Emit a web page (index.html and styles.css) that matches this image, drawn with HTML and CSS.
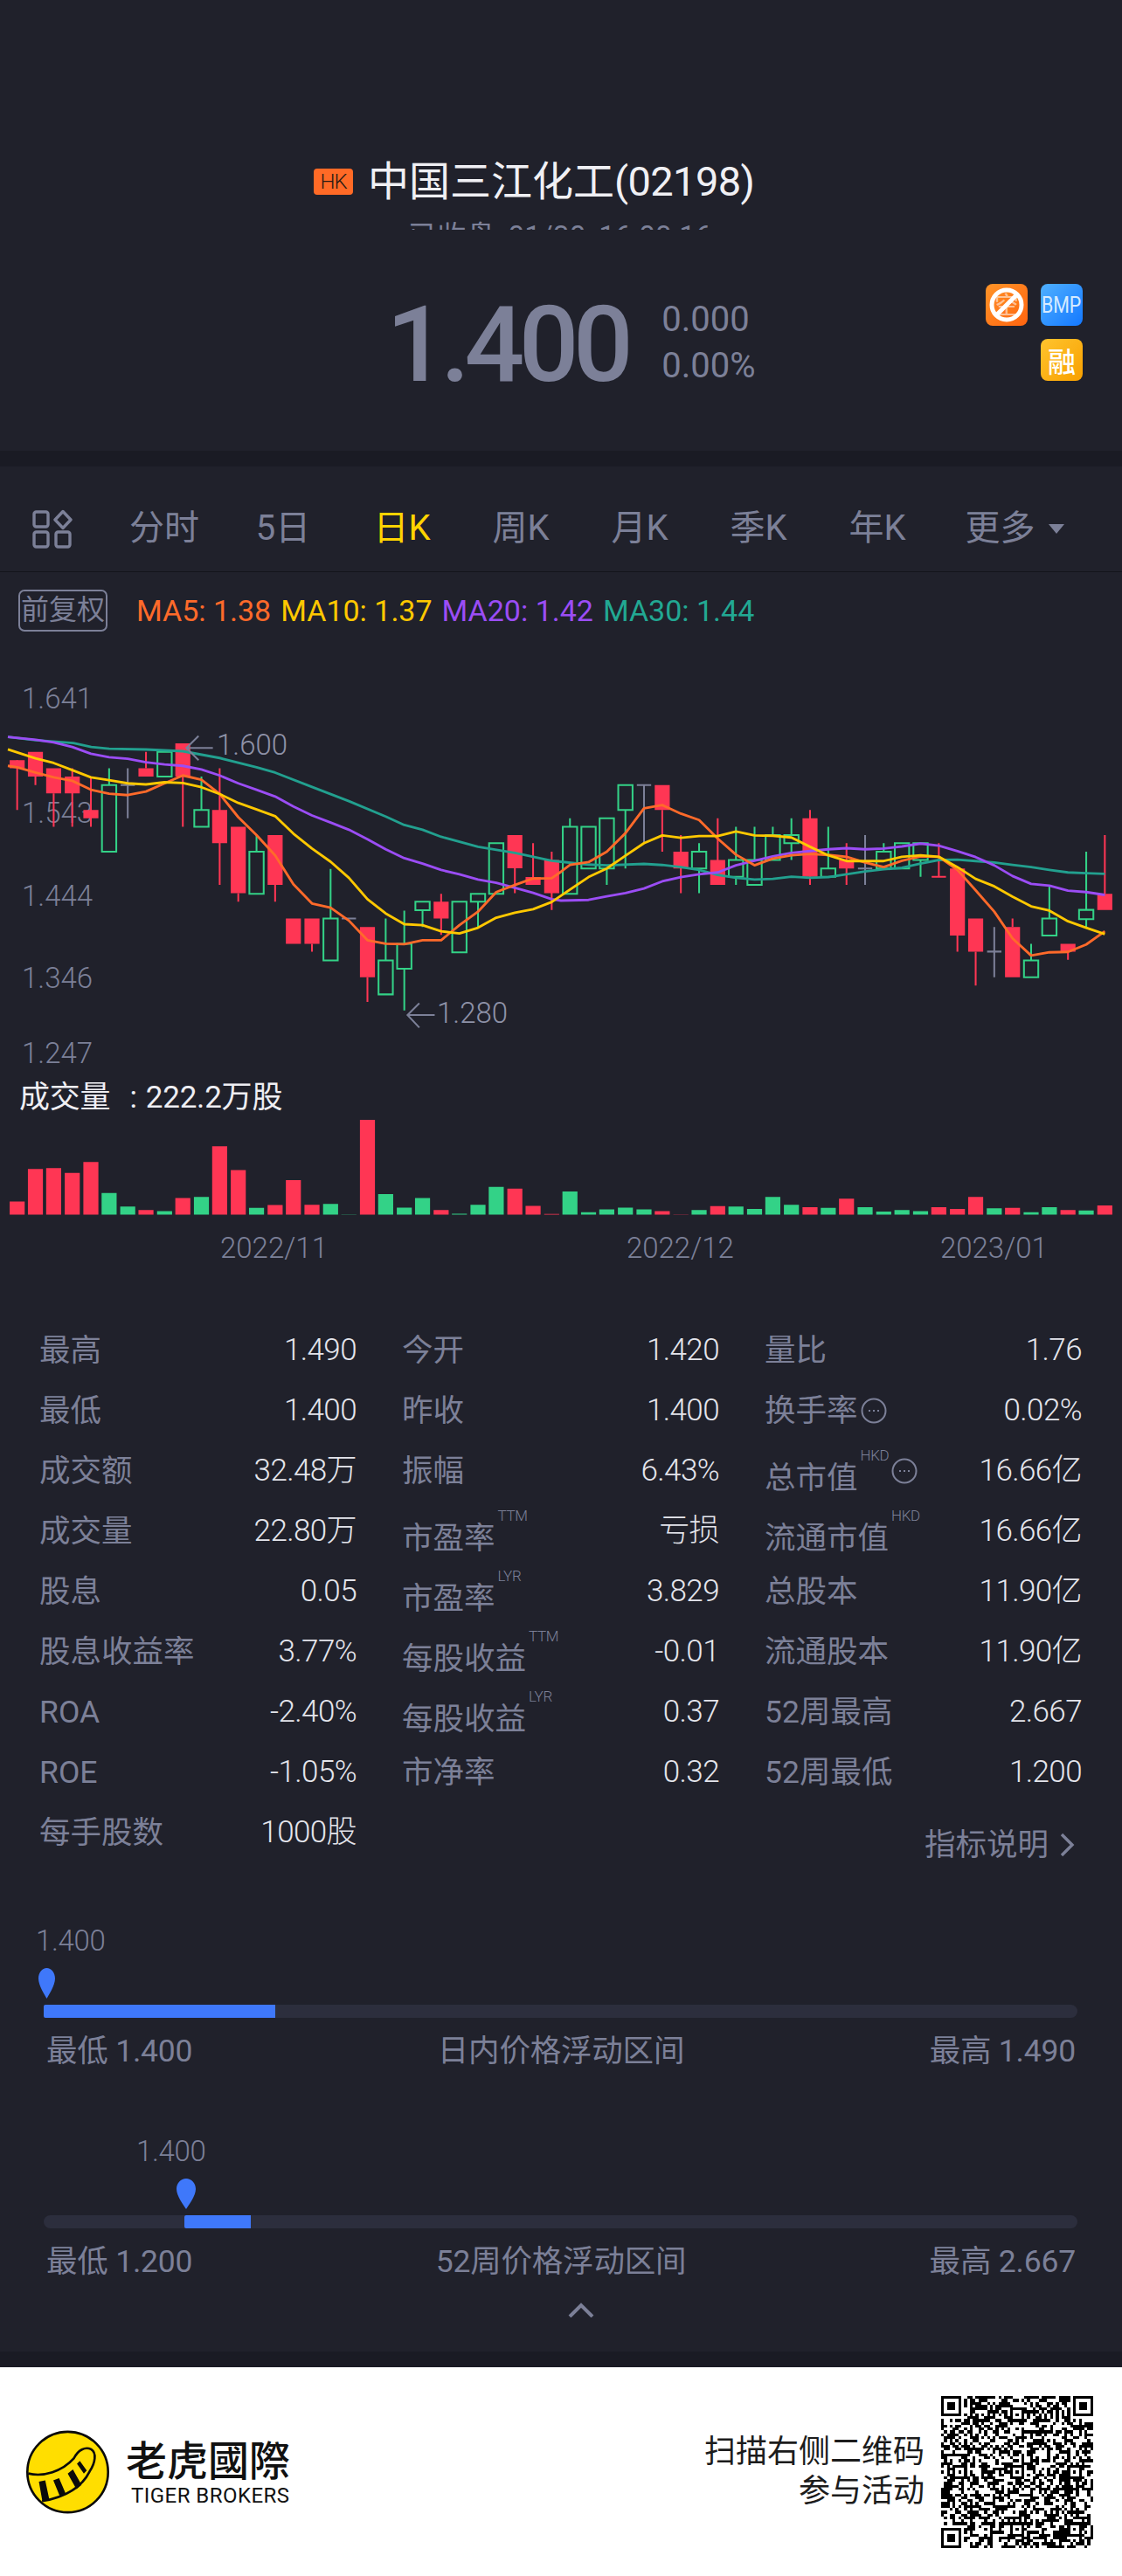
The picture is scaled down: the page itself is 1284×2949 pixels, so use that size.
FILE: index.html
```html
<!DOCTYPE html>
<html lang="zh">
<head>
<meta charset="utf-8">
<title>中国三江化工(02198)</title>
<link rel="stylesheet" href="styles.css">
</head>
<body>
<main class="page">
  <header class="quote">
    <div class="title-row">
      <span class="mkt">HK</span>
      <h1 class="name">中国三江化工<span class="code">(02198)</span></h1>
    </div>
    <div class="status-clip"><div class="status">已收盘 01/30 16:08:16</div></div>
    <div class="price-row">
      <div class="price">1.400</div>
      <div class="change"><div>0.000</div><div>0.00%</div></div>
      <div class="badges">
        <span class="badge b-short">
          <svg viewBox="0 0 48 48" width="48" height="48"><text x="24" y="35" text-anchor="middle" class="short-t">空</text><circle cx="24" cy="24" r="17" fill="none" stroke="#fff" stroke-width="5"/><path d="M12 36L36 12" stroke="#fff" stroke-width="5"/></svg>
        </span>
        <span class="badge b-bmp"><span class="bmp-t">BMP</span></span>
        <span class="badge b-rong">融</span>
      </div>
    </div>
  </header>
  <div class="strip"></div>

  <nav class="tabs">
    <svg class="tab-icon" viewBox="0 0 46 45" width="46" height="45" fill="none" stroke="#7c8098" stroke-width="3.4"><rect x="2" y="3" width="16" height="17" rx="2.5"/><rect x="2" y="26" width="16" height="17" rx="2.5"/><rect x="27" y="26" width="16" height="17" rx="2.5"/><path d="M35 2.5l9 9.5-9 9.5-9-9.5z" stroke-linejoin="round"/></svg>
    <span class="tab">分时</span>
    <span class="tab">5日</span>
    <span class="tab on">日K</span>
    <span class="tab">周K</span>
    <span class="tab">月K</span>
    <span class="tab">季K</span>
    <span class="tab">年K</span>
    <span class="tab more">更多<i class="tri"></i></span>
  </nav>

  <div class="legend">
    <span class="adj">前复权</span>
    <span class="ma ma5">MA5: 1.38</span>
    <span class="ma ma10">MA10: 1.37</span>
    <span class="ma ma20">MA20: 1.42</span>
    <span class="ma ma30">MA30: 1.44</span>
  </div>

  <section class="chart">
    <span class="ylab y1">1.641</span>
    <span class="ylab y2">1.543</span>
    <span class="ylab y3">1.444</span>
    <span class="ylab y4">1.346</span>
    <span class="ylab y5">1.247</span>
    <svg class="plot" viewBox="0 0 3136 1568" preserveAspectRatio="none">
      <path class="wick-r" d="M48 270V410M99 316V340M150 363V457M202 293V457M254 320V457M408 247V293M511 316V457M614 293V620M666 643V667M769 620V667M872 785V807M1027 879V948M1233 645V760M1439 573V643M1490 503V598M1542 527V690M1851 410V527M1903 480V643M2006 433V620M2264 410V620M2366 503V620M2624 503V597M2604 597H2644M2676 762V807M2727 807V902M2830 714V738M2985 807V830M3088 480V645"/>
      <path class="wick-g" d="M305 293V340M460 240V247M563 316V410M717 480V527M924 575V714M1078 714V832M1130 692V785M1130 855V972M1181 691V738M1336 667V738M1593 433V457M1696 574V620M1748 410V574M1954 503V527M1954 574V643M2057 457V550M2057 597V620M2109 457V550M2160 457V480M2212 433V480M2212 503V550M2315 457V574M2470 503V527M2573 550V597M2882 785V832M2933 625V714M3036 527V690M3036 716V738"/>
      <path class="wick-n" d="M357 293V433M337 340H377M955 714H995M1780 340H1820M1800 340V500M2398 574H2438M2418 480V620M2759 807H2799M2779 738V879"/>
      <path class="body-r" d="M27 270h42v23h-42zM78 247h42v69h-42zM129 293h42v70h-42zM181 316h42v47h-42zM233 410h42v23h-42zM387 293h42v23h-42zM490 223h42v93h-42zM593 410h42v93h-42zM645 457h42v186h-42zM748 480h42v140h-42zM799 714h42v71h-42zM851 714h42v71h-42zM1006 738h42v141h-42zM1212 667h42v47h-42zM1418 480h42v93h-42zM1469 598h42v22h-42zM1521 550h42v93h-42zM1830 340h42v70h-42zM1882 527h42v47h-42zM1985 550h42v70h-42zM2243 433h42v164h-42zM2345 550h42v24h-42zM2655 574h42v188h-42zM2706 714h42v93h-42zM2809 738h42v141h-42zM2964 785h42v22h-42zM3067 645h42v45h-42z"/>
      <path class="body-g" d="M285 340h40v187h-40zM440 247h40v69h-40zM543 410h40v47h-40zM697 527h40v118h-40zM904 714h40v118h-40zM1058 832h40v95h-40zM1110 785h40v70h-40zM1161 667h40v24h-40zM1264 667h40v142h-40zM1316 645h40v22h-40zM1367 503h40v142h-40zM1573 457h40v188h-40zM1625 457h40v117h-40zM1676 433h40v141h-40zM1728 340h40v70h-40zM1934 527h40v47h-40zM2037 550h40v47h-40zM2089 550h40v70h-40zM2140 480h40v70h-40zM2192 480h40v23h-40zM2295 574h40v23h-40zM2450 527h40v47h-40zM2501 503h40v71h-40zM2553 503h40v47h-40zM2862 832h40v47h-40zM2913 714h40v48h-40zM3016 690h40v26h-40z"/>
      <polyline class="l30" points="22,205 100,214 205,222 255,233 305,238 408,240 511,245 614,264 717,290 769,305 872,345 975,385 1078,428 1130,452 1181,465 1233,485 1336,513 1439,530 1542,552 1568,555 1645,563 1696,565 1800,561 1851,564 1903,570 1954,578 2006,592 2057,600 2109,605 2160,603 2212,597 2264,600 2315,598 2366,590 2418,582 2470,576 2521,572 2573,560 2624,550 2676,549 2727,553 2779,557 2830,564 2882,570 2933,578 2985,585 3036,587 3088,589"/>
      <polyline class="l20" points="22,205 100,213 150,220 202,233 254,252 305,262 357,266 408,276 460,282 511,286 563,296 614,313 666,335 717,353 769,372 820,400 872,425 924,445 975,465 1027,492 1078,520 1130,545 1181,560 1233,578 1284,590 1336,605 1387,614 1439,628 1490,642 1542,660 1568,664 1645,662 1696,652 1748,643 1800,630 1851,610 1903,598 1954,590 2006,585 2057,565 2109,552 2160,540 2212,530 2264,525 2315,520 2366,517 2418,520 2470,518 2521,512 2573,504 2624,510 2676,525 2727,542 2779,565 2830,595 2882,617 2933,622 2985,636 3036,640 3088,648"/>
      <polyline class="l5" points="22,286 48,290 99,305 150,318 202,328 254,353 305,364 357,368 408,358 460,335 511,313 563,325 614,365 666,430 717,480 769,537 820,618 872,672 924,684 975,720 1027,775 1078,785 1130,786 1181,775 1233,775 1284,733 1336,695 1387,640 1439,620 1490,602 1542,601 1568,583 1593,564 1645,556 1696,527 1748,475 1800,405 1851,396 1903,420 1954,438 2006,490 2057,535 2109,565 2160,546 2212,537 2264,533 2315,536 2366,541 2418,557 2470,570 2521,552 2573,540 2624,541 2676,578 2727,635 2779,695 2830,770 2882,818 2933,809 2985,808 3036,787 3088,750"/>
      <polyline class="l10" points="22,240 99,265 150,278 202,298 254,318 305,326 357,335 408,338 460,332 511,334 563,346 614,365 666,390 717,408 769,427 820,476 872,518 924,555 975,600 1027,660 1078,700 1130,730 1181,733 1233,750 1284,756 1336,740 1387,712 1439,698 1490,688 1542,668 1568,650 1645,598 1696,574 1748,538 1800,503 1851,481 1903,488 1954,483 2006,483 2057,470 2109,481 2160,482 2212,487 2264,513 2315,537 2366,553 2418,553 2470,553 2521,541 2573,537 2624,541 2676,570 2727,603 2779,624 2830,653 2882,680 2933,692 2985,722 3036,740 3088,758"/>
      <path class="arrow" d="M595 236H522M555 202L521 236L555 270M1215 985H1140M1172 952L1139 985L1172 1020"/>
      <path class="vol-r" d="M27 1508h42V1545h-42zM78 1417h42V1545h-42zM129 1414h42V1545h-42zM181 1428h42V1545h-42zM233 1397h42V1545h-42zM387 1532h42V1545h-42zM490 1498h42V1545h-42zM593 1353h42V1545h-42zM645 1420h42V1545h-42zM748 1518h42V1545h-42zM799 1448h42V1545h-42zM851 1517h42V1545h-42zM1006 1279h42V1545h-42zM1212 1532h42V1545h-42zM1418 1472h42V1545h-42zM1469 1520h42V1545h-42zM1521 1543h42V1545h-42zM1830 1535h42V1545h-42zM1882 1544h42V1545h-42zM1985 1521h42V1545h-42zM2243 1524h42V1545h-42zM2345 1500h42V1545h-42zM2603 1524h42V1545h-42zM2655 1529h42V1545h-42zM2706 1495h42V1545h-42zM2809 1526h42V1545h-42zM2964 1532h42V1545h-42zM3067 1519h42V1545h-42z"/>
      <path class="vol-g" d="M284 1484h42V1545h-42zM336 1522h42V1545h-42zM439 1535h42V1545h-42zM542 1495h42V1545h-42zM696 1526h42V1545h-42zM903 1515h42V1545h-42zM954 1544h42V1545h-42zM1057 1487h42V1545h-42zM1109 1525h42V1545h-42zM1160 1498h42V1545h-42zM1263 1542h42V1545h-42zM1315 1517h42V1545h-42zM1366 1467h42V1545h-42zM1572 1480h42V1545h-42zM1624 1538h42V1545h-42zM1675 1530h42V1545h-42zM1727 1525h42V1545h-42zM1779 1530h42V1545h-42zM1933 1532h42V1545h-42zM2036 1522h42V1545h-42zM2088 1529h42V1545h-42zM2139 1495h42V1545h-42zM2191 1517h42V1545h-42zM2294 1526h42V1545h-42zM2397 1524h42V1545h-42zM2449 1536h42V1545h-42zM2500 1532h42V1545h-42zM2552 1535h42V1545h-42zM2758 1527h42V1545h-42zM2861 1538h42V1545h-42zM2912 1524h42V1545h-42zM3015 1533h42V1545h-42z"/>
    </svg>
    <span class="mark m-high">1.600</span>
    <span class="mark m-low">1.280</span>
    <span class="vol-label">成交量<span class="colon">:</span>222.2万股</span>
  </section>

  <div class="dates">
    <span class="d1">2022/11</span>
    <span class="d2">2022/12</span>
    <span class="d3">2023/01</span>
  </div>

  <section class="stats">
    <div class="stat"><span class="lab">最高</span><span class="val">1.490</span></div>
    <div class="stat"><span class="lab">今开</span><span class="val">1.420</span></div>
    <div class="stat"><span class="lab">量比</span><span class="val">1.76</span></div>

    <div class="stat"><span class="lab">最低</span><span class="val">1.400</span></div>
    <div class="stat"><span class="lab">昨收</span><span class="val">1.400</span></div>
    <div class="stat"><span class="lab">换手率<svg class="info" viewBox="0 0 30 30" width="30" height="30"><circle cx="15" cy="15" r="13.5"/><path d="M9 15h2M14 15h2M19 15h2"/></svg></span><span class="val">0.02%</span></div>

    <div class="stat"><span class="lab">成交额</span><span class="val">32.48万</span></div>
    <div class="stat"><span class="lab">振幅</span><span class="val">6.43%</span></div>
    <div class="stat"><span class="lab"><span class="low">总市值</span><span class="sup">HKD</span><svg class="info" viewBox="0 0 30 30" width="30" height="30"><circle cx="15" cy="15" r="13.5"/><path d="M9 15h2M14 15h2M19 15h2"/></svg></span><span class="val">16.66亿</span></div>

    <div class="stat"><span class="lab">成交量</span><span class="val">22.80万</span></div>
    <div class="stat"><span class="lab"><span class="low">市盈率</span><span class="sup">TTM</span></span><span class="val">亏损</span></div>
    <div class="stat"><span class="lab"><span class="low">流通市值</span><span class="sup">HKD</span></span><span class="val">16.66亿</span></div>

    <div class="stat"><span class="lab">股息</span><span class="val">0.05</span></div>
    <div class="stat"><span class="lab"><span class="low">市盈率</span><span class="sup">LYR</span></span><span class="val">3.829</span></div>
    <div class="stat"><span class="lab">总股本</span><span class="val">11.90亿</span></div>

    <div class="stat"><span class="lab">股息收益率</span><span class="val">3.77%</span></div>
    <div class="stat"><span class="lab"><span class="low">每股收益</span><span class="sup">TTM</span></span><span class="val">-0.01</span></div>
    <div class="stat"><span class="lab">流通股本</span><span class="val">11.90亿</span></div>

    <div class="stat"><span class="lab">ROA</span><span class="val">-2.40%</span></div>
    <div class="stat"><span class="lab"><span class="low">每股收益</span><span class="sup">LYR</span></span><span class="val">0.37</span></div>
    <div class="stat"><span class="lab">52周最高</span><span class="val">2.667</span></div>

    <div class="stat"><span class="lab">ROE</span><span class="val">-1.05%</span></div>
    <div class="stat"><span class="lab">市净率</span><span class="val">0.32</span></div>
    <div class="stat"><span class="lab">52周最低</span><span class="val">1.200</span></div>

    <div class="stat"><span class="lab">每手股数</span><span class="val">1000股</span></div>
    <div class="stat"></div>
    <div class="stat help"><span class="help-t">指标说明</span><svg viewBox="0 0 18 28" width="18" height="28" fill="none" stroke="#7c8098" stroke-width="3.4"><path d="M3 2l12 12L3 26"/></svg></div>
  </section>

  <section class="range r-day">
    <div class="now now-day">1.400</div>
    <svg class="pin pin-day" viewBox="0 0 22 35" preserveAspectRatio="none"><path d="M11 0C17 0 22 5 22 12C22 20 14 30 11 35C8 30 0 20 0 12C0 5 5 0 11 0Z"/></svg>
    <div class="track"><div class="fill" style="margin-left:0;width:22.4%"></div></div>
    <div class="range-labels"><span>最低 1.400</span><span>日内价格浮动区间</span><span>最高 1.490</span></div>
  </section>

  <section class="range r-year">
    <div class="now now-year">1.400</div>
    <svg class="pin pin-year" viewBox="0 0 22 35"><path d="M11 0C17 0 22 5 22 12C22 20 14 30 11 35C8 30 0 20 0 12C0 5 5 0 11 0Z"/></svg>
    <div class="track"><div class="fill" style="margin-left:13.6%;width:6.4%"></div></div>
    <div class="range-labels"><span>最低 1.200</span><span>52周价格浮动区间</span><span>最高 2.667</span></div>
  </section>

  <div class="collapse"><svg viewBox="0 0 30 17" width="30" height="17" fill="none" stroke="#7c8098" stroke-width="4"><path d="M2 16L15 3l13 13"/></svg></div>
  <div class="strip"></div>

  <footer class="promo">
    <div class="brand">
      <svg class="logo" viewBox="90 62 288 290" width="95" height="96">
        <circle cx="234" cy="207" r="140" fill="#ffde00" stroke="#0b0b0b" stroke-width="8"/>
        <path d="M97 212C150 225 215 205 255 160C270 130 295 118 315 128C335 140 330 175 310 205C280 265 220 295 145 308" fill="none" stroke="#0b0b0b" stroke-width="8"/>
        <path d="M134 240L156 236L170 302L146 308ZM184 236L204 228L228 284L208 294ZM234 212L252 198L282 252L264 266ZM266 178L276 168L300 202L290 212Z" fill="#0b0b0b"/>
      </svg>
      <div class="brand-t">
        <div class="brand-cn">老虎國際</div>
        <div class="brand-en">TIGER BROKERS</div>
      </div>
    </div>
    <div class="scan">
      <p class="scan-t">扫描右侧二维码<br>参与活动</p>
      <svg id="qr" class="qr" viewBox="0 0 53 53" width="174" height="174" shape-rendering="crispEdges"><path id="qr-path" fill="#000"/></svg>
    </div>
  </footer>
</main>
<script src="qr.js"></script>
</body>
</html>
```

FILE: styles.css
```css
* { box-sizing: border-box; margin: 0; padding: 0; }
html, body { background: #20212b; }
body {
  width: 1284px;
  font-family: Roboto, "Noto Sans CJK SC", sans-serif;
  color: #7c8098;
}
.page { width: 1284px; height: 2949px; overflow: hidden; }

.quote { height: 516px; }
.title-row { display: flex; align-items: center; gap: 17px; padding: 185px 0 0 359px; height: 231px; }
.mkt {
  width: 45px; height: 30px; border-radius: 4px; background: #ff6a26; color: #2a1a14;
  font-size: 24px; line-height: 30px; text-align: center; letter-spacing: -1px; font-weight: 300;
}
.name { font-size: 47px; line-height: 46px; font-weight: 400; color: #f0f0f4; white-space: nowrap; }
.code { letter-spacing: -.6px; }
.status-clip { height: 12px; margin-top: 20px; padding-left: 467px; overflow: hidden; }
.status { font-size: 33px; line-height: 40px; color: #7c8098; white-space: nowrap; word-spacing: 6px; letter-spacing: .3px; }
.price-row { display: flex; align-items: flex-start; margin-top: 62px; padding: 0 45px 0 442px; }
.price { margin-top: 10px; font-size: 121px; line-height: 120px; font-weight: 500; letter-spacing: -6.5px; color: #7c8098; }
.change { margin: 14px 0 0 39px; font-size: 40px; line-height: 53px; }
.badges { display: grid; grid-template-columns: 48px 48px; gap: 15px; margin-left: auto; }
.badge {
  width: 48px; height: 48px; border-radius: 8px; display: flex; align-items: center; justify-content: center;
  color: #fff; overflow: hidden;
}
.b-short { background: linear-gradient(135deg, #ff9428, #ff6410); }
.short-t { font-size: 28px; fill: #fff; fill-opacity: .55; }
.b-bmp { background: linear-gradient(135deg, #4fb0ff, #1478ff); }
.bmp-t { font-size: 26px; line-height: 30px; color: #d6ebff; transform: scaleX(.82); }
.b-rong { grid-column: 2; background: linear-gradient(135deg, #ffc42e, #f8a000); font-size: 32px; font-weight: 500; }

.strip { height: 18px; background: #1a1b24; }

.tabs {
  display: grid; grid-template-columns: 83px repeat(8, 136px); justify-items: center; align-items: center;
  height: 121px; padding: 22px 0 0 37px; border-bottom: 1px solid #13141b;
  font-size: 40px; line-height: 48px;
}
.tab-icon { justify-self: start; }
.tab { color: #7c8098; white-space: nowrap; }
.tab.on { color: #ffd400; }
.more { display: flex; align-items: center; margin-left: 42px; }
.tri { width: 0; height: 0; margin-left: 15px; border-style: solid; border-width: 11px 9px 0; border-color: #7c8098 transparent transparent; }

.legend { display: flex; align-items: center; height: 105px; padding: 20px 0 37px 21px; font-size: 34px; line-height: 48px; font-weight: 300; }
.adj { width: 102px; height: 48px; border: 2.5px solid #7c8098; border-radius: 7px; font-size: 32px; line-height: 42px; text-align: center; white-space: nowrap; font-weight: 400; }
.ma { margin-left: 11px; white-space: nowrap; font-weight: 400; }
.ma5 { margin-left: 33px; color: #ff6a2a; }
.ma10 { color: #ffc800; }
.ma20 { color: #9b4df5; }
.ma30 { color: #22a893; }

.chart { position: relative; height: 640px; }
.plot { position: absolute; left: 0; top: 0; width: 1284px; height: 640px; display: block; }
.ylab, .mark { position: absolute; font-size: 33px; line-height: 40px; font-weight: 300; color: #7c8098; }
.ylab { left: 25px; }
.y1 { top: 20px; } .y2 { top: 151px; } .y3 { top: 246px; } .y4 { top: 340px; } .y5 { top: 426px; }
.mark { color: #8e92a8; }
.m-high { left: 248px; top: 73px; }
.m-low { left: 500px; top: 380px; }
.vol-label { position: absolute; left: 22px; top: 472px; font-size: 35px; line-height: 50px; color: #eeeef3; white-space: nowrap; letter-spacing: -.2px; }
.colon { margin: 0 10px 0 22px; }
.wick-r, .wick-g, .wick-n, .body-g, .l30, .l20, .l10, .l5, .arrow { fill: none; }
.wick-r { stroke: #ff3654; stroke-width: 5; }
.wick-g { stroke: #33d287; stroke-width: 5; }
.wick-n { stroke: #7c8098; stroke-width: 5; }
.body-r, .vol-r { fill: #ff3654; }
.vol-g { fill: #33d287; }
.body-g { stroke: #33d287; stroke-width: 5; }
.l30, .l20, .l10, .l5 { stroke-width: 7; stroke-linejoin: round; }
.l30 { stroke: #22a08f; }
.l20 { stroke: #9b4df5; }
.l10 { stroke: #ffc800; }
.l5 { stroke: #ff6a2a; }
.arrow { stroke: #7c8098; stroke-width: 5; }

.dates { display: flex; height: 56px; padding-left: 252px; font-size: 33px; line-height: 57px; font-weight: 300; color: #7c8098; }
.d2 { margin-left: 342px; }
.d3 { margin-left: 236px; }

.stats {
  display: grid; grid-template-columns: repeat(3, 363px); grid-auto-rows: 69px; column-gap: 52px;
  padding: 55.5px 0 0 45px; height: 675.5px;
  font-size: 35.5px; line-height: 40px;
}
.stat { display: flex; align-items: center; justify-content: space-between; white-space: nowrap; }
.lab { display: flex; align-items: center; color: #7c8098; }
.val { color: #e4e5ec; font-size: 35px; letter-spacing: -.6px; font-weight: 300; }
.low { padding-top: 16px; }
.sup { margin: 0 0 36px 3px; font-size: 17px; line-height: 20px; font-weight: 300; letter-spacing: -.4px; }
.info { margin-left: 3px; fill: none; stroke: #7c8098; stroke-width: 2; }
.help { justify-content: flex-end; gap: 12px; padding: 28px 8px 0 0; }
.help-t { color: #7c8098; }

.range { padding: 0 51px 0 50px; }
.r-day { padding-top: 70px; }
.r-year { padding-top: 75px; }
.now { font-size: 33px; line-height: 40px; font-weight: 300; letter-spacing: -.3px; }
.now-day { margin-left: -9px; }
.now-year { margin-left: 106px; }
.pin { display: block; height: 35px; margin-top: 11px; fill: #3f78fa; }
.pin-day { width: 19px; margin-left: -6px; }
.pin-year { width: 22px; margin-left: 152px; }
.track { height: 15px; margin-top: 7px; border-radius: 8px; background: #2c2e3d; }
.fill { height: 15px; border-radius: 2px 0 0 2px; background: #3f78fa; }
.range-labels { display: flex; justify-content: space-between; margin-top: 18px; padding: 0 2px 0 3px; font-size: 35.5px; line-height: 40px; white-space: nowrap; letter-spacing: -.2px; }

.collapse { display: flex; justify-content: center; height: 83px; padding: 27px 0 0 45px; }

.promo { display: flex; align-items: center; justify-content: space-between; height: 240px; padding: 0 33px 0 30px; background: #fff; color: #111; }
.brand { display: flex; align-items: center; gap: 19px; }
.logo { display: block; }
.brand-cn { font-family: "Noto Sans CJK TC", "Noto Sans CJK SC", sans-serif; font-size: 47px; line-height: 46px; font-weight: 500; white-space: nowrap; }
.brand-en { margin-top: 8px; margin-left: 6px; font-size: 24px; line-height: 24px; white-space: nowrap; letter-spacing: .45px; }
.scan { display: flex; align-items: center; gap: 19px; }
.scan-t { font-size: 36px; line-height: 45px; text-align: right; color: #1c1c1c; white-space: nowrap; }
.qr { display: block; }
```

FILE: qr.js
```js
(function () {
  var N = 53, g = [], seed = 20230130;
  function rnd() { seed = (seed * 1664525 + 1013904223) >>> 0; return (seed >>> 16) & 1; }
  for (var y = 0; y < N; y++) { g[y] = []; for (var x = 0; x < N; x++) g[y][x] = rnd(); }
  function box(cx, cy, outer, paint) {
    for (var y = cy - outer; y <= cy + outer; y++) for (var x = cx - outer; x <= cx + outer; x++) {
      if (y < 0 || x < 0 || y >= N || x >= N) continue;
      g[y][x] = paint(Math.max(Math.abs(x - cx), Math.abs(y - cy)));
    }
  }
  var finder = function (d) { return d === 4 || d === 2 ? 0 : 1; };
  [[3, 3], [49, 3], [3, 49]].forEach(function (p) { box(p[0], p[1], 4, finder); });
  for (var i = 8; i < N - 8; i++) { g[6][i] = (i + 1) % 2; g[i][6] = (i + 1) % 2; }
  var align = function (d) { return d === 1 ? 0 : 1; };
  [[26, 6], [6, 26], [26, 26], [46, 26], [26, 46], [46, 46]].forEach(function (p) { box(p[0], p[1], 2, align); });
  var d = "";
  for (var r = 0; r < N; r++) {
    for (var c = 0; c < N; c++) {
      if (!g[r][c]) continue;
      var s = c;
      while (c + 1 < N && g[r][c + 1]) c++;
      d += "M" + s + " " + r + "h" + (c - s + 1) + "v1h-" + (c - s + 1) + "z";
    }
  }
  document.getElementById("qr-path").setAttribute("d", d);
})();
```
